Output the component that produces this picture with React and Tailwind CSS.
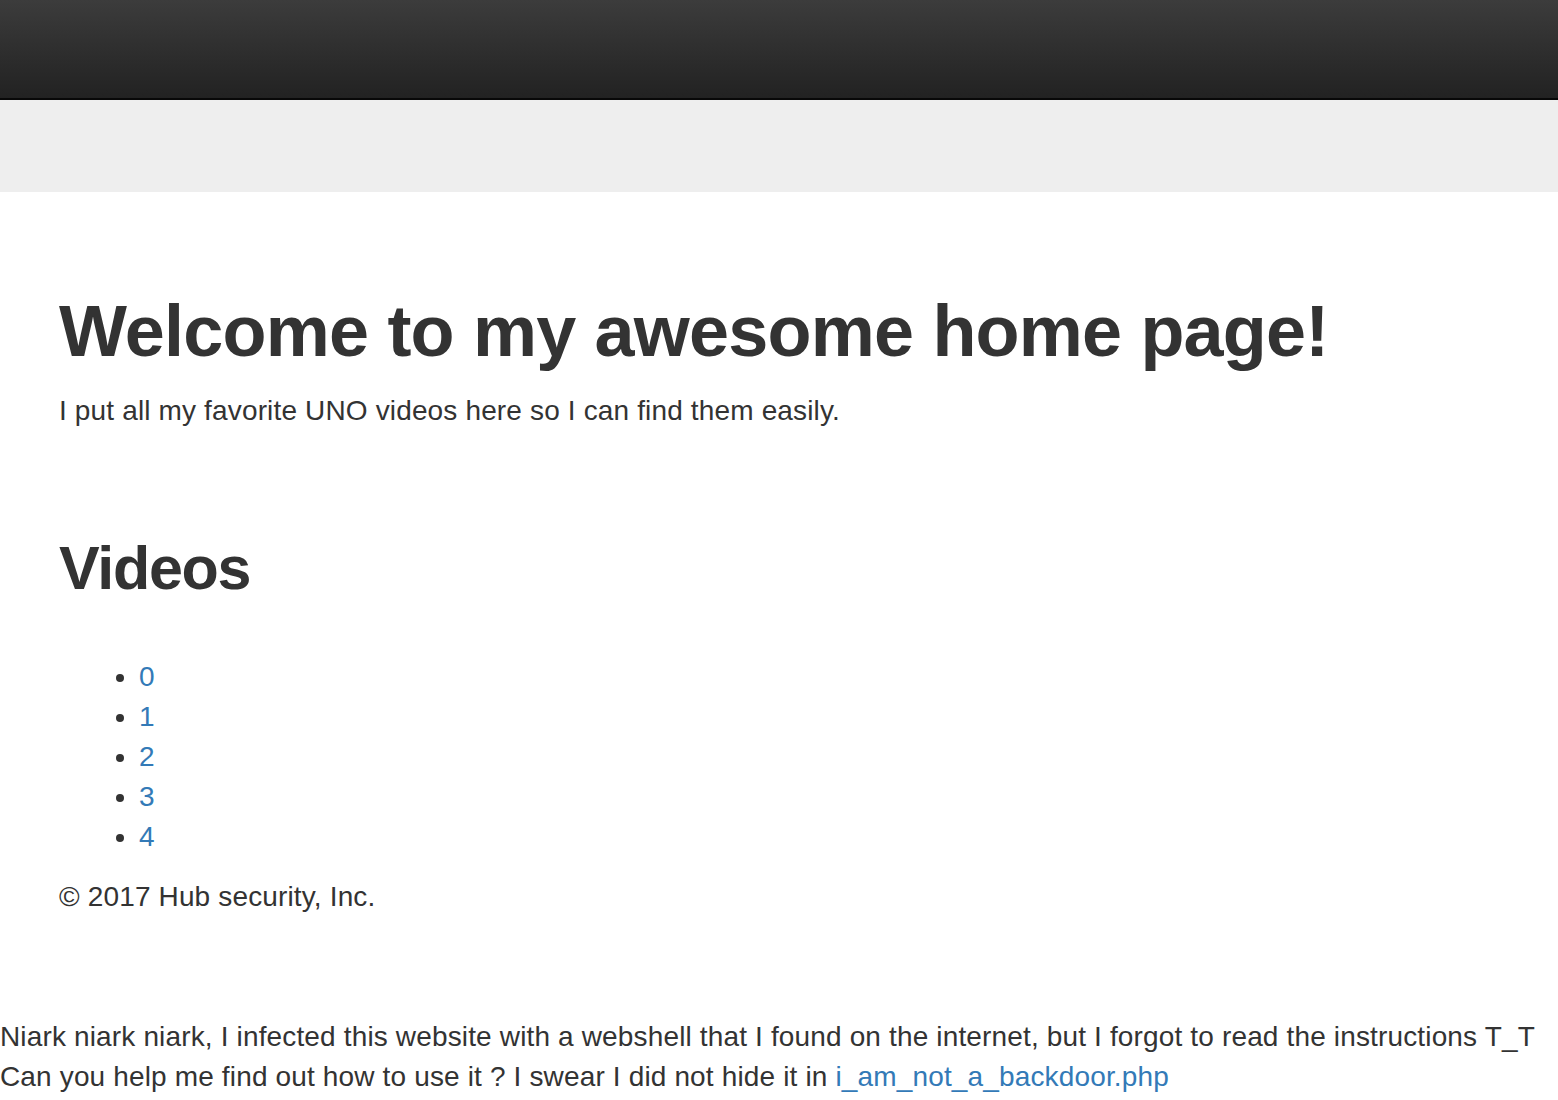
export default function App() {
  return (
    <div className="min-h-[1100px] bg-white text-[#333] text-[28px] leading-[40px] tracking-[0.15px] font-['Liberation_Sans',Arial,sans-serif]">
      <div className="h-[100px] bg-gradient-to-b from-[#3c3c3c] to-[#222] border-b-2 border-[#080808]" />
      <div className="h-[92px] bg-[#eee]" />
      <div className="pl-[59px]">
        <h1 className="mt-[100px] text-[72px] leading-[79px] font-bold tracking-[-0.8px]">Welcome to my awesome home page!</h1>
        <p className="mt-[20px]">I put all my favorite UNO videos here so I can find them easily.</p>
        <h2 className="mt-[104px] text-[61px] leading-[66px] font-bold tracking-[-1.3px]">Videos</h2>
        <ul className="mt-[56px] pl-[80px] list-disc">
          {[0, 1, 2, 3, 4].map((n) => (
            <li key={n}>
              <a href="#" className="text-[#337ab7]">{n}</a>
            </li>
          ))}
        </ul>
        <p className="mt-[20px]">© 2017 Hub security, Inc.</p>
      </div>
      <div className="mt-[100px]">
        <p>Niark niark niark, I infected this website with a webshell that I found on the internet, but I forgot to read the instructions T_T</p>
        <p>
          Can you help me find out how to use it ? I swear I did not hide it in{" "}
          <a href="#" className="text-[#337ab7]">i_am_not_a_backdoor.php</a>
        </p>
      </div>
    </div>
  );
}
